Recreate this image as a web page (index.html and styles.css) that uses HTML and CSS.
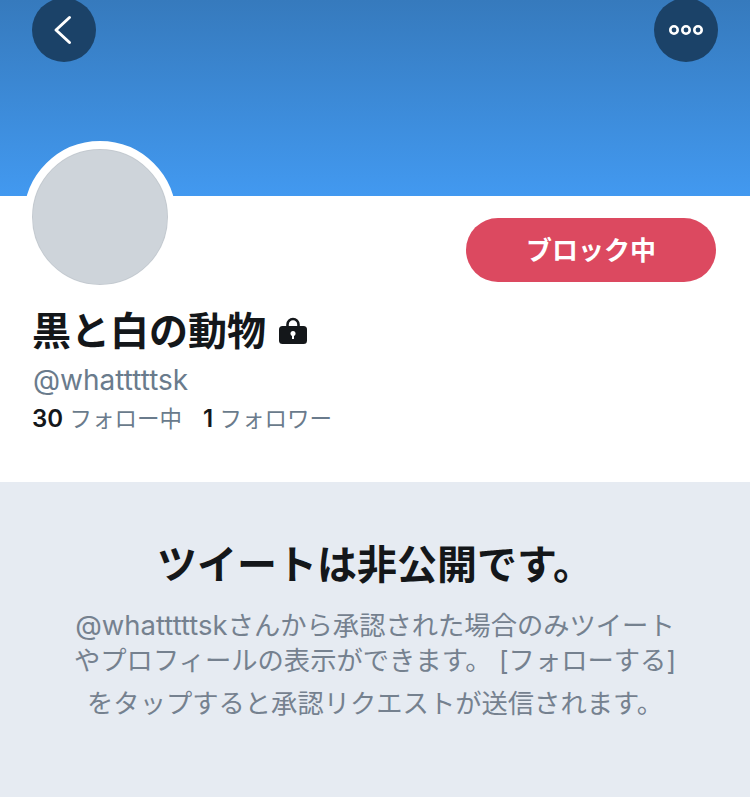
FILE: index.html
```html
<!DOCTYPE html>
<html lang="ja">

<head>
    <meta charset="UTF-8">
    <title>黒と白の動物</title>
    <link rel="stylesheet" href="styles.css">
</head>

<body>
    <header class="banner">
        <button class="round-btn" aria-label="戻る">
            <svg width="64" height="64" viewBox="0 0 64 64">
                <path d="M37.500 19.500 L24 32 L37.500 44.500" fill="none" stroke="#fff" stroke-width="3" stroke-linecap="round" stroke-linejoin="round"/>
            </svg>
        </button>
        <button class="round-btn" aria-label="その他">
            <svg width="64" height="64" viewBox="0 0 64 64">
                <g fill="none" stroke="#fff" stroke-width="2.600">
                    <circle cx="20" cy="32" r="3.700"/>
                    <circle cx="32" cy="32" r="3.700"/>
                    <circle cx="44" cy="32" r="3.700"/>
                </g>
            </svg>
        </button>
    </header>

    <section class="profile">
        <div class="profile-top">
            <div class="avatar"></div>
            <button class="block-btn">ブロック中</button>
        </div>
        <h1 class="name">黒と白の動物
            <svg class="lock" width="30" height="30" viewBox="0 0 30 30">
                <path d="M9.500 12 V9.500 a5.500 5.500 0 0 1 11 0 V12" fill="none" stroke="#14171a" stroke-width="2.600"/>
                <rect x="1" y="11" width="28" height="18" rx="3.500" fill="#14171a"/>
                <circle cx="15" cy="18.500" r="2.500" fill="#fff"/>
                <rect x="14" y="19" width="2" height="5" fill="#fff"/>
            </svg>
        </h1>
        <div class="handle">@whatttttsk</div>
        <div class="stats">
            <span class="stat"><b>30</b> フォロー中</span>
            <span class="stat"><b>1</b> フォロワー</span>
        </div>
    </section>

    <section class="private">
        <h2>ツイートは非公開です。</h2>
        <p class="line"><span class="line-handle">@whatttttsk</span>さんから承認された場合のみツイート</p>
        <p class="line">やプロフィールの表示ができます。 [フォローする]</p>
        <p class="line last">をタップすると承認リクエストが送信されます。</p>
    </section>
</body>

</html>
```

FILE: styles.css
```css
* {
    box-sizing: border-box;
    font-family: "Inter", "Noto Sans CJK JP", sans-serif;
}

html,
body {
    margin: 0;
    height: 797px;
    overflow: hidden;
    background-color: #e6ebf2;
}

.banner {
    height: 196px;
    padding: 0 32px;
    display: flex;
    justify-content: space-between;
    align-items: flex-start;
    background: linear-gradient(#367abd, #4299f0);
}

.round-btn {
    width: 64px;
    height: 64px;
    margin-top: -2px;
    padding: 0;
    border: 0;
    border-radius: 50%;
    background-color: #1b4268;
}

.round-btn svg {
    display: block;
}

.profile {
    height: 286px;
    padding: 0 34px 0 32px;
    background-color: #fff;
}

.profile-top {
    display: flex;
    justify-content: space-between;
    align-items: flex-start;
}

.avatar {
    width: 152px;
    height: 152px;
    margin: -55px 0 0 -8px;
    border: 8px solid #fff;
    border-radius: 50%;
    background-color: #ced4da;
    box-shadow: inset 0 0 0 1px #c4cad0;
}

.block-btn {
    width: 250px;
    height: 64px;
    margin-top: 22px;
    padding: 0 0 4px;
    border: 0;
    border-radius: 32px;
    background-color: #dc4960;
    color: #fff;
    font-size: 26px;
    font-weight: 700;
}

.name {
    margin: 8px 0 0;
    display: flex;
    align-items: center;
    gap: 12px;
    height: 54px;
    font-size: 39px;
    font-weight: 700;
    color: #14171a;
}

.lock {
    margin-top: 3px;
}

.handle {
    margin: 7px 0 0 1px;
    font-size: 28px;
    line-height: 36px;
    color: #6a7b8c;
}

.stats {
    margin: 5px 0 0;
    display: flex;
    gap: 21px;
    font-size: 22.500px;
    line-height: 32px;
    color: #6a7b8c;
}

.stat b {
    font-weight: 600;
    font-size: 24px;
    color: #14171a;
}

.private {
    height: 315px;
    padding-top: 57px;
    text-align: center;
    background-color: #e6ebf2;
}

.private h2 {
    margin: 0 0 17px;
    font-size: 40px;
    line-height: 52px;
    font-weight: 700;
    color: #14171a;
}

.line {
    margin: 0;
    font-size: 26.300px;
    line-height: 35px;
    color: #75818f;
}

.line-handle {
    font-size: 27.500px;
}

.line.last {
    margin-top: 8px;
}
```
